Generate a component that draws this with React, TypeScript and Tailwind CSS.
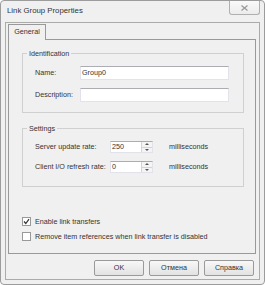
import React from "react";

function Spin({ value }: { value: string }) {
  return (
    <div className="flex h-[12px] w-[43px] border border-[#e2e3ea] border-t-[#abadb3] bg-white">
      <div className="flex-1 pl-[1px] leading-[10px]">{value}</div>
      <div className="flex w-[11px] flex-col border-l border-[#d4d4d4] bg-[#f4f4f4]">
        <div className="flex flex-1 items-center justify-center border-b border-[#d4d4d4]">
          <div className="h-0 w-0 border-x-[2px] border-b-[2px] border-x-transparent border-b-[#555]" />
        </div>
        <div className="flex flex-1 items-center justify-center">
          <div className="h-0 w-0 border-x-[2px] border-t-[2px] border-x-transparent border-t-[#555]" />
        </div>
      </div>
    </div>
  );
}

function Group({ label, h, mt, children }: { label: string; h: string; mt: string; children: React.ReactNode }) {
  return (
    <div className={`relative ml-[13px] w-[222px] border border-[#d0d0d0] ${h} ${mt}`}>
      <span className="absolute left-[4px] top-[-5px] bg-[#f0f0f0] px-[2px] leading-[9px]">{label}</span>
      {children}
    </div>
  );
}

function Check({ checked, label, mt }: { checked: boolean; label: string; mt: string }) {
  return (
    <div className={`ml-[13px] flex items-center ${mt}`}>
      <div className="flex h-[9px] w-[9px] items-center justify-center border border-[#999] bg-white">
        {checked && (
          <svg width="7" height="7" viewBox="0 0 7 7">
            <path d="M1 3.5 L2.8 5.5 L6 1.2" stroke="#333" strokeWidth="1.2" fill="none" />
          </svg>
        )}
      </div>
      <span className="ml-[4px] leading-[9px]">{label}</span>
    </div>
  );
}

function Btn({ children }: { children: React.ReactNode }) {
  return (
    <div className="flex h-[16px] w-[50px] items-center justify-center rounded-[2px] border border-[#9a9a9a] bg-gradient-to-b from-[#f8f8f8] to-[#e2e2e2]">
      {children}
    </div>
  );
}

export default function App() {
  return (
    <div
      className="flex h-[285px] w-[265px] flex-col rounded-[4px] border border-[#9c9c9c] bg-[#f0f0f0] px-[4px] pb-[4px] text-[7.2px] text-[#333]"
      style={{ fontFamily: '"Liberation Sans", Arial, sans-serif' }}
    >
      <div className="flex h-[21px] items-start justify-between">
        <span className="pl-[2px] pt-[5px] text-[7.8px] leading-[10px] text-[#333]">Link Group Properties</span>
        <div className="flex h-[14px] w-[31px] items-center justify-center rounded-b-[3px] border border-t-0 border-[#b0b0b0] bg-gradient-to-b from-[#fafafa] to-[#ececec]">
          <svg width="7" height="6" viewBox="0 0 7 6">
            <path d="M0.5 0.5 L6.5 5.5 M6.5 0.5 L0.5 5.5" stroke="#999" strokeWidth="1.2" />
          </svg>
        </div>
      </div>
      <div className="flex flex-1 flex-col border border-[#ababab] pl-[2px] pr-[3px] pt-[1px]">
        <div className="flex">
          <div className="z-10 -mb-[1px] flex h-[16px] w-[38px] items-center justify-center border border-b-0 border-[#999] bg-[#f0f0f0] pb-[1px]">
            General
          </div>
        </div>
        <div className="flex h-[215px] flex-col border border-[#999]">
          <Group label="Identification" h="h-[60px]" mt="mt-[13px]">
            <div className="flex flex-col pl-[12px] pt-[12px]">
              <div className="flex items-center">
                <span className="w-[45px]">Name:</span>
                <div className="h-[14px] w-[149px] border border-[#e2e3ea] border-t-[#abadb3] bg-white pl-[1px] leading-[12px]">Group0</div>
              </div>
              <div className="mt-[8px] flex items-center">
                <span className="w-[45px]">Description:</span>
                <div className="h-[14px] w-[149px] border border-[#e2e3ea] border-t-[#abadb3] bg-white" />
              </div>
            </div>
          </Group>
          <Group label="Settings" h="h-[59px]" mt="mt-[15px]">
            <div className="flex flex-col pl-[12px] pt-[12px]">
              <div className="flex items-center">
                <span className="w-[75px]">Server update rate:</span>
                <Spin value="250" />
                <span className="ml-[16px]">milliseconds</span>
              </div>
              <div className="mt-[8px] flex items-center">
                <span className="w-[75px]">Client I/O refresh rate:</span>
                <Spin value="0" />
                <span className="ml-[16px]">milliseconds</span>
              </div>
            </div>
          </Group>
          <Check checked label="Enable link transfers" mt="mt-[30px]" />
          <Check checked={false} label="Remove item references when link transfer is disabled" mt="mt-[6px]" />
        </div>
        <div className="mr-[2px] mt-[6px] flex justify-end gap-[5px]">
          <Btn>OK</Btn>
          <Btn>Отмена</Btn>
          <Btn>Справка</Btn>
        </div>
      </div>
    </div>
  );
}
